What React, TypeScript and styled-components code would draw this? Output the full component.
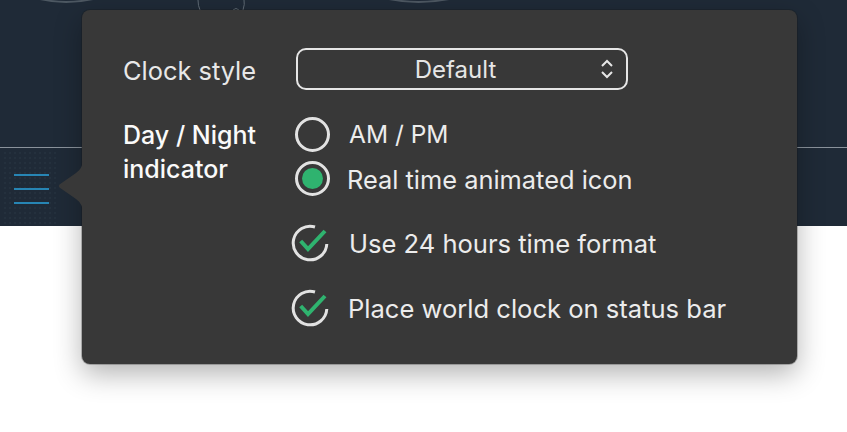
import { FC } from "react";
import styled, { createGlobalStyle } from "styled-components";

const GlobalStyle = createGlobalStyle`
  html, body {
    margin: 0;
    padding: 0;
    background: #fff;
  }
  body {
    font-family: Inter, "Noto Sans", sans-serif;
  }
`;

const Page = styled.div`
  position: relative;
  width: 847px;
  height: 432px;
  overflow: hidden;
  background: #fff;
`;

const Header = styled.div`
  height: 226px;
  display: flex;
  flex-direction: column;
  background: #1f2a37;
`;

const MapArea = styled.div`
  position: relative;
  height: 147px;
  border-bottom: 1px solid #8a929b;
  overflow: hidden;
`;

const MapLines = styled.svg`
  position: absolute;
  left: 0;
  top: 0;
`;

const Toolbar = styled.div`
  position: relative;
  flex: 1;
  display: flex;
  align-items: center;
  padding: 4px 0 0 14px;

  &::before {
    content: "";
    position: absolute;
    left: 4px;
    top: 4px;
    bottom: 2px;
    width: 54px;
    background-image: radial-gradient(circle at 1px 1px, rgba(125, 145, 165, 0.06) 0.7px, transparent 1px);
    background-size: 5px 5px;
  }
`;

const MenuButton = styled.div`
  position: relative;
  width: 35px;
  height: 30px;
  display: flex;
  flex-direction: column;
  justify-content: space-between;
`;

const MenuLine = styled.span`
  height: 2px;
  background: #2785b4;
`;

const Popover = styled.div`
  position: absolute;
  left: 82px;
  top: 10px;
  width: 715px;
  height: 354px;
  box-sizing: border-box;
  padding: 38px 0 0 41px;
  display: flex;
  flex-direction: column;
  background: #383838;
  border-radius: 8px;
  box-shadow: 0 0 0 1px rgba(20, 20, 20, 0.25), 0 10px 28px rgba(0, 0, 0, 0.3);
  color: #ececec;
  font-size: 25.4px;
`;

const Arrow = styled.svg`
  position: absolute;
  left: -25px;
  top: 151px;
`;

const ClockRow = styled.div`
  display: flex;
  align-items: center;
`;

const IndicatorRow = styled.div`
  display: flex;
  align-items: flex-start;
  margin-top: 26px;
`;

const Label = styled.div<{ $strong?: boolean; $top: number }>`
  width: 173px;
  padding-top: ${(p) => p.$top}px;
  line-height: 34px;
  color: ${(p) => (p.$strong ? "#fafafa" : "#e8e8e8")};
  font-weight: ${(p) => (p.$strong ? 500 : 400)};
  font-size: ${(p) => (p.$strong ? 25 : 25.4)}px;
`;

const Select = styled.div`
  position: relative;
  width: 332px;
  height: 42px;
  box-sizing: border-box;
  border: 2px solid #e6e6e6;
  border-radius: 10px;
  display: flex;
  align-items: center;
  justify-content: center;
  padding-right: 13px;
  color: #e6e6e6;
  font-size: 24px;
`;

const Chevrons = styled.svg`
  position: absolute;
  right: 12px;
  top: 8px;
`;

const RadioList = styled.div`
  display: flex;
  flex-direction: column;
  gap: 8px;
`;

const OptionRow = styled.div`
  display: flex;
  align-items: center;
  height: 36px;
`;

const RadioCircle = styled.span`
  width: 35px;
  height: 35px;
  box-sizing: border-box;
  border: 3px solid #e2e2e2;
  border-radius: 50%;
  display: flex;
  align-items: center;
  justify-content: center;
  margin-left: -1px;
`;

const RadioDot = styled.span`
  width: 21px;
  height: 21px;
  border-radius: 50%;
  background: #2fb36f;
`;

const OptionText = styled.span<{ $gap: number; $size: number; $nudge?: number }>`
  margin-left: ${(p) => p.$gap}px;
  margin-top: ${(p) => p.$nudge ?? 0}px;
  font-size: ${(p) => p.$size}px;
`;

const CheckList = styled.div`
  display: flex;
  flex-direction: column;
  gap: 29px;
  margin: 29px 0 0 168px;
`;

const CheckIcon = styled.svg`
  flex: none;
  overflow: visible;
`;

const RadioOption: FC<{ label: string; selected?: boolean; gap: number; size: number; nudge?: number }> = ({
  label,
  selected,
  gap,
  size,
  nudge,
}) => (
  <OptionRow>
    <RadioCircle>{selected && <RadioDot />}</RadioCircle>
    <OptionText $gap={gap} $size={size} $nudge={nudge}>
      {label}
    </OptionText>
  </OptionRow>
);

const CheckOption: FC<{ label: string; gap: number; nudge?: number }> = ({ label, gap, nudge }) => (
  <OptionRow>
    <CheckIcon width="38" height="38" viewBox="0 0 38 38" fill="none">
      <path d="M24 3 A16.8 16.8 0 1 0 35.8 20" stroke="#e2e2e2" strokeWidth="3" />
      <path d="M9.7 17 L17 25 L34 7" stroke="#2fb36f" strokeWidth="4" />
    </CheckIcon>
    <OptionText $gap={gap} $size={25.55} $nudge={nudge}>
      {label}
    </OptionText>
  </OptionRow>
);

const App: FC = () => (
  <Page>
    <GlobalStyle />
    <Header>
      <MapArea>
        <MapLines width="847" height="12" viewBox="0 0 847 12" fill="none">
          <path d="M40 -1 Q66 5 93 -1" stroke="#4d5862" strokeWidth="2" />
          <path d="M389 -1 Q418 5 449 -1" stroke="#4d5862" strokeWidth="2" />
          <path d="M198 0 Q198 6 200 10" stroke="#5f6a74" strokeWidth="1" />
          <path d="M244 0 Q245 4 243 10 M233 10 Q236 7 239 10" stroke="#5f6a74" strokeWidth="1" />
        </MapLines>
      </MapArea>
      <Toolbar>
        <MenuButton>
          <MenuLine />
          <MenuLine />
          <MenuLine />
        </MenuButton>
      </Toolbar>
    </Header>
    <Popover>
      <Arrow width="26" height="50" viewBox="0 0 26 50">
        <path
          d="M26 0 C25 6 23 9 19 12 L2.5 23.5 Q1 25 2.5 26.5 L19 38 C23 41 25 44 26 50 Z"
          fill="#383838"
        />
      </Arrow>
      <ClockRow>
        <Label $top={4}>Clock style</Label>
        <Select>
          Default
          <Chevrons width="14" height="22" viewBox="0 0 14 22" fill="none">
            <path d="M2 8 L7 3 L12 8" stroke="#e6e6e6" strokeWidth="2" />
            <path d="M2 14 L7 19 L12 14" stroke="#e6e6e6" strokeWidth="2" />
          </Chevrons>
        </Select>
      </ClockRow>
      <IndicatorRow>
        <Label $strong $top={2}>
          Day / Night
          <br />
          indicator
        </Label>
        <RadioList>
          <RadioOption label="AM / PM" gap={19} size={24.5} />
          <RadioOption label="Real time animated icon" selected gap={17} size={25.4} nudge={3} />
        </RadioList>
      </IndicatorRow>
      <CheckList>
        <CheckOption label="Use 24 hours time format" gap={20} />
        <CheckOption label="Place world clock on status bar" gap={19} />
      </CheckList>
    </Popover>
  </Page>
);

export default App;
